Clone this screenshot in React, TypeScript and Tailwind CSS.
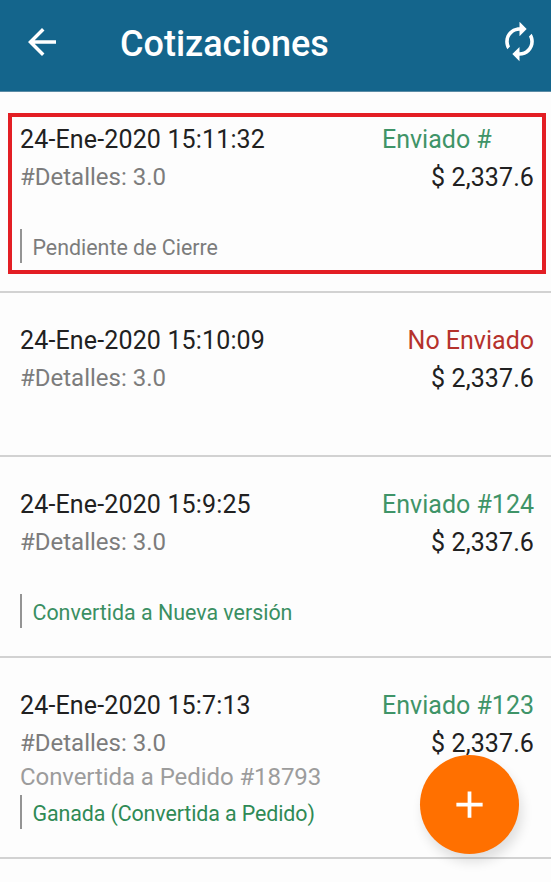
import { MdAdd, MdArrowBack, MdAutorenew } from "react-icons/md";

interface Quote {
  date: string;
  details: string;
  total: string;
  sync: string;
  sent: boolean;
  order?: string;
  status?: string;
  statusClass?: string;
  highlighted?: boolean;
}

const quotes: Quote[] = [
  {
    date: "24-Ene-2020 15:11:32",
    details: "3.0",
    total: "$ 2,337.6",
    sync: "Enviado #",
    sent: true,
    status: "Pendiente de Cierre",
    statusClass: "text-[#7c7c7c]",
    highlighted: true,
  },
  {
    date: "24-Ene-2020 15:10:09",
    details: "3.0",
    total: "$ 2,337.6",
    sync: "No Enviado",
    sent: false,
  },
  {
    date: "24-Ene-2020 15:9:25",
    details: "3.0",
    total: "$ 2,337.6",
    sync: "Enviado #124",
    sent: true,
    status: "Convertida a Nueva versión",
    statusClass: "text-[#3a8f62]",
  },
  {
    date: "24-Ene-2020 15:7:13",
    details: "3.0",
    total: "$ 2,337.6",
    sync: "Enviado #123",
    sent: true,
    order: "Convertida a Pedido #18793",
    status: "Ganada (Convertida a Pedido)",
    statusClass: "text-[#2f8a55] tracking-[-0.1px]",
  },
];

const Header = () => (
  <header className="flex h-[92px] items-center border-b border-[#5a8ba5] bg-[#14658c] pr-[10px] pl-[21px] text-white">
    <button aria-label="Volver" className="mt-[-8px]">
      <MdArrowBack size={42} />
    </button>
    <h1 className="mt-[-4px] ml-[57px] flex-1 text-[36px] font-medium">
      Cotizaciones
    </h1>
    <button aria-label="Actualizar" className="mt-[-8px]">
      <MdAutorenew size={43} />
    </button>
  </header>
);

const QuoteRow = ({ quote }: { quote: Quote }) => (
  <li className="relative border-b-2 border-[#d2d2d2] pt-[29px] pr-[17px] pb-7 pl-5 text-[25px]">
    <div className="flex justify-between leading-[38px] text-[#212121]">
      <span className="tracking-[0.15px]">{quote.date}</span>
      <span
        className={`${quote.sent ? "text-[#3f9468]" : "text-[#b5322c]"} ${quote.highlighted ? "w-[152px]" : ""}`}
      >
        {quote.sync}
      </span>
    </div>
    <div className="flex h-[38px] justify-between leading-[38px]">
      <span className="text-[24px] leading-[36px] text-[#7c7c7c]">
        #Detalles: {quote.details}
      </span>
      <span className="tracking-[0.1px] text-[#212121]">{quote.total}</span>
    </div>
    <p className="h-[29px] text-[24px] leading-[29px] tracking-[-0.08px] text-[#9c9c9c]">
      {quote.order}
    </p>
    {quote.status && (
      <div className="mt-[3px] h-[34px] border-l-2 border-[#949494] pl-[10.5px] text-[21.4px] leading-[38px]">
        <span className={quote.statusClass}>{quote.status}</span>
      </div>
    )}
    {quote.highlighted && (
      <div className="absolute top-[21px] left-2 h-[161px] w-[538px] border-4 border-[#e31e24]" />
    )}
  </li>
);

const App = () => {
  return (
    <div className="relative h-[882px] w-[551px] overflow-hidden bg-[#fdfdfd] font-['Roboto',sans-serif]">
      <Header />
      <ul>
        {quotes.map((quote) => (
          <QuoteRow key={quote.date} quote={quote} />
        ))}
      </ul>
      <button
        aria-label="Agregar"
        className="absolute right-8 bottom-7 flex size-[99px] items-center justify-center rounded-full bg-[#ff7000] text-white shadow-[3px_8px_12px_rgba(0,0,0,0.12)]"
      >
        <MdAdd size={45} />
      </button>
    </div>
  );
};

export default App;
